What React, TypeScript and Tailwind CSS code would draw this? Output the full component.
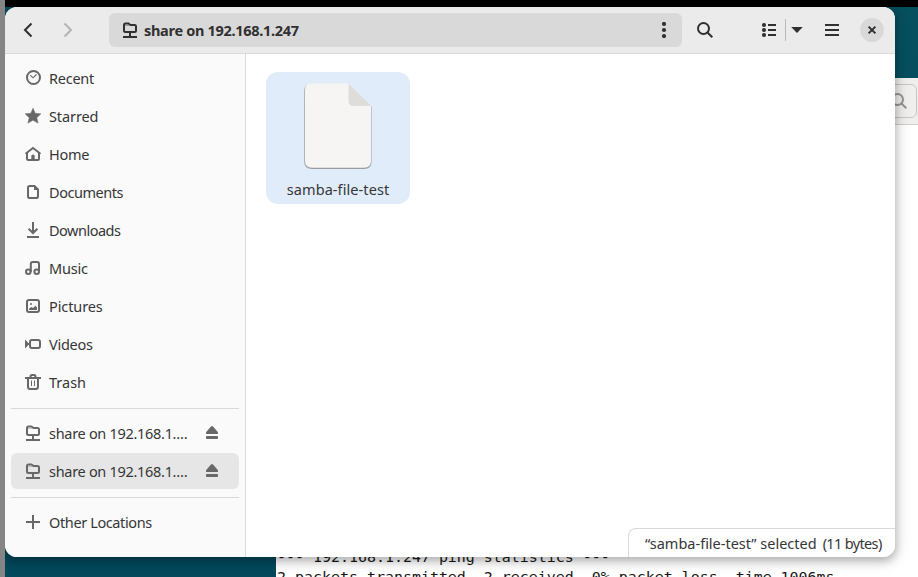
import type { ReactNode } from "react";

function Icon({ children, className = "" }: { children: ReactNode; className?: string }) {
  return (
    <svg viewBox="0 0 16 16" className={`h-4 w-4 shrink-0 ${className}`} fill="none" stroke="currentColor" strokeWidth="2">
      {children}
    </svg>
  );
}

const RemoteFolder = ({ className = "" }: { className?: string }) => (
  <Icon className={className}>
    <path d="M2 3V8.500Q2 10 3.500 10H12.500Q14 10 14 8.500V4.500Q14 3 12.500 3H8.500L6.500 1.500H3.500Q2 1.500 2 3Z" strokeWidth="2" />
    <path d="M3 3.500H7" strokeWidth="1" strokeOpacity=".35" />
    <path d="M8 11V14M1 15H15" />
  </Icon>
);

const Magnifier = ({ className = "" }: { className?: string }) => (
  <Icon className={className}>
    <circle cx="6.5" cy="6.5" r="5.5" />
    <path d="M10.5 10.5L15.3 15.3" />
  </Icon>
);

const Eject = () => (
  <Icon className="ml-auto">
    <path d="M2 9V7.300L7 1.600Q8 .6 9 1.600L14 7.300V9Z" fill="currentColor" stroke="none" />
    <rect x="2" y="11" width="12" height="3" rx=".8" fill="currentColor" stroke="none" />
  </Icon>
);

const places: { label: string; spacing: string; icon: ReactNode }[] = [
  {
    label: "Recent",
    spacing: "tracking-[-0.25px]",
    icon: (
      <>
        <circle cx="8.500" cy="7.500" r="6.500" />
        <path d="M5.300 5.200L8 7.800L11.500 4.500" strokeWidth="1.100" />
      </>
    ),
  },
  {
    label: "Starred",
    spacing: "tracking-[-0.1px]",
    icon: <path d="M8 0L10.200 5.200L16 5.800L11.800 9.700L13.200 15.200L8 12.300L2.800 15.200L4.200 9.700L0 5.800L5.800 5.200Z" fill="currentColor" stroke="currentColor" strokeWidth=".4" />,
  },
  {
    label: "Home",
    spacing: "tracking-[-0.25px]",
    icon: (
      <>
        <path d="M.5 7.800L8 2L15.500 7.800M2 7V12.500Q2 14 3.500 14H12.500Q14 14 14 12.500V7" />
        <path d="M6.300 14V10Q6.300 8.500 8 8.500T9.700 10V14Z" fill="currentColor" stroke="none" />
      </>
    ),
  },
  {
    label: "Documents",
    spacing: "tracking-[-0.45px]",
    icon: (
      <>
        <path d="M3 3.800Q3 2 4.800 2H9.500L13 5.500V12.200Q13 14 11.200 14H4.800Q3 14 3 12.200Z" />
        <path d="M9 2V6H13Z" fill="currentColor" stroke="none" />
      </>
    ),
  },
  {
    label: "Downloads",
    spacing: "tracking-[-0.5px]",
    icon: <path d="M8 0V11M3.600 6.800L8 11L12.400 6.800M2 15H14" />,
  },
  {
    label: "Music",
    spacing: "tracking-[-0.2px]",
    icon: (
      <>
        <circle cx="3.300" cy="11.700" r="2.300" />
        <circle cx="11.700" cy="11.700" r="2.300" />
        <path d="M5.800 12V4Q5.800 2 7.800 2H12Q14 2 14 4V12" />
      </>
    ),
  },
  {
    label: "Pictures",
    spacing: "tracking-[-0.1px]",
    icon: (
      <>
        <rect x="2" y="2" width="12" height="12" rx="2" />
        <path d="M4 12V10.700L6.300 9L8 10L10.500 7.700L12 9.500V12Z" fill="currentColor" stroke="none" />
        <circle cx="6" cy="6" r="1" fill="currentColor" stroke="none" />
      </>
    ),
  },
  {
    label: "Videos",
    spacing: "tracking-[-0.25px]",
    icon: (
      <>
        <rect x="5" y="4" width="10" height="8" rx="2" />
        <path d="M0 3.500L4.500 8L0 12.500Z" fill="currentColor" stroke="none" />
      </>
    ),
  },
  {
    label: "Trash",
    spacing: "tracking-[0px]",
    icon: (
      <>
        <path d="M0 4H16M3 4V12.500Q3 15 5 15H11Q13 15 13 12.500V4M5.500 4V2.500Q5.500 1 7 1H9Q10.500 1 10.500 2.500V4" />
        <path d="M6.500 6.500V12M9.500 6.500V12" strokeWidth="1" />
      </>
    ),
  },
];

function Row({ label, icon, spacing = "", selected = false, eject = false }: { label: string; icon: ReactNode; spacing?: string; selected?: boolean; eject?: boolean }) {
  return (
    <div className={`flex h-9 shrink-0 items-center rounded-md pr-[19px] pl-3.5 ${selected ? "bg-[#e6e6e6]" : ""}`}>
      <span className="mr-2 flex text-[#686868]">{icon}</span>
      <span className={`pt-0.5 whitespace-nowrap ${spacing}`}>{label}</span>
      {eject && <span className="ml-auto flex text-[#686868]"><Eject /></span>}
    </div>
  );
}

function Header() {
  return (
    <header className="flex h-[47px] shrink-0 items-center border-b border-[#d9d9d9] bg-[#ebebeb] text-[#303030]">
      <Icon className="ml-4"><path d="M10.500 1.500L4 8L10.500 14.500" /></Icon>
      <Icon className="ml-6 text-[#b4b4b4]"><path d="M3.500 1.500L10 8L3.500 14.500" /></Icon>
      <div className="ml-8 flex h-[34px] w-[573px] items-center rounded-md bg-[#d9d9d9] pr-2.5 pl-3">
        <RemoteFolder className="mr-1.5 ml-px" />
        <span className="pt-0.5 text-[14.5px] font-bold tracking-[-0.3px] whitespace-nowrap">share on 192.168.1.247</span>
        <Icon className="ml-auto">
          <g fill="currentColor" stroke="none"><circle cx="8" cy="2" r="2.1" /><circle cx="8" cy="8" r="2.1" /><circle cx="8" cy="14" r="2.1" /></g>
        </Icon>
      </div>
      <Magnifier className="ml-[15px]" />
      <Icon className="ml-12">
        <path d="M7 3H15M7 8H15M7 13H15" />
        <g fill="currentColor" stroke="none"><circle cx="3" cy="3" r="2.1" /><circle cx="3" cy="8" r="2.1" /><circle cx="3" cy="13" r="2.1" /></g>
      </Icon>
      <div className="ml-2 h-[22px] w-px bg-[#b9b9b9]" />
      <Icon className="ml-[3px]"><path d="M2.200 5H13.800L8 11Z" fill="currentColor" stroke="none" /></Icon>
      <Icon className="ml-[19px]"><path d="M1 3H15M1 8H15M1 13H15" /></Icon>
      <div className="ml-5 flex h-6 w-6 items-center justify-center rounded-full bg-[#d9d9d9]">
        <Icon><path d="M4.600 4.600L11.400 11.400M11.400 4.600L4.600 11.400" /></Icon>
      </div>
    </header>
  );
}

export default function App() {
  return (
    <main className="relative h-[577px] w-[918px] overflow-hidden bg-gradient-to-b from-[#07505f] to-[#03485b] font-['Noto_Sans',sans-serif] text-[14.5px] text-[#363636]">
      <section className="absolute top-[78px] left-[276px] flex h-[520px] w-[680px] flex-col bg-white">
        <div className="flex h-[47px] shrink-0 items-center border-b border-[#d4cecb] bg-[#f1efee]">
          <div className="ml-[600px] flex h-[34px] w-[41px] items-center justify-end rounded-md border border-[#cbc5c1] pr-[9px] text-[#949494]">
            <Magnifier />
          </div>
        </div>
        <pre className="mt-[422px] pl-px font-['DejaVu_Sans_Mono',monospace] text-[14.95px] leading-[20px] text-[#171717]">
          {"--- 192.168.1.247 ping statistics ---\n2 packets transmitted, 2 received, 0% packet loss, time 1006ms"}
        </pre>
      </section>
      <div className="absolute top-[7px] left-[5px] h-[550px] w-[890px] rounded-xl shadow-[0_3px_9px_1px_rgba(0,0,0,0.25),0_2px_14px_5px_rgba(0,0,0,0.08)]" />
      <div className="absolute top-0 left-0 h-full w-[5px] bg-[#858585]" />
      <div className="absolute top-0 left-[5px] h-[7px] w-full bg-black" />
      <section className="absolute top-[7px] left-[5px] flex h-[550px] w-[890px] flex-col overflow-hidden rounded-xl bg-white">
        <Header />
        <div className="flex min-h-0 grow">
          <nav className="flex w-[241px] shrink-0 flex-col gap-0.5 border-r border-[#d9d9d9] bg-[#fafafa] px-1.5 pt-1.5">
            {places.map((place) => (
              <Row key={place.label} label={place.label} spacing={place.spacing} icon={<Icon>{place.icon}</Icon>} />
            ))}
            <hr className="mt-1.5 mb-1 shrink-0 border-[#d9d9d9]" />
            <Row label="share on 192.168.1.…" spacing="tracking-[-0.3px]" icon={<RemoteFolder />} eject />
            <Row label="share on 192.168.1.…" spacing="tracking-[-0.3px]" icon={<RemoteFolder />} selected eject />
            <hr className="mt-1.5 mb-1 shrink-0 border-[#d9d9d9]" />
            <Row label="Other Locations" spacing="tracking-[-0.38px]" icon={<Icon><path d="M8 1V15M1 8H15" /></Icon>} />
          </nav>
          <div className="flex min-w-0 grow flex-col justify-between">
            <div className="mt-[18px] ml-5 flex h-[132px] w-36 flex-col items-center rounded-xl bg-[#e1ecfa] pt-[11px]">
              <svg viewBox="0 0 70 88" className="h-[88px] w-[70px] shrink-0">
                <path d="M8 1H45.500L68.500 23.500V79Q68.500 86 61 86H9Q1.300 86 1.300 79V8Q1.300 1 8 1Z" fill="#9a9ea4" />
                <path d="M8 .5H45.500L68 23V78Q68 84.700 61 84.700H9Q2 84.700 2 78V7Q2 .5 8 .5Z" fill="#f6f5f4" />
                <path d="M45.500 .5L68 23H50.500Q45.500 23 45.500 18Z" fill="#deddda" />
              </svg>
              <span className="mt-2 leading-5 tracking-[0.08px] whitespace-nowrap">samba-file-test</span>
            </div>
            <div className="flex h-[29px] w-[267px] items-center gap-1.5 self-end rounded-tl-lg border-t border-l border-[#d9d9d9] pt-0.5 pl-4 whitespace-nowrap">
              <span>“samba-file-test” selected</span>
              <span className="tracking-[-0.65px]">(11 bytes)</span>
            </div>
          </div>
        </div>
      </section>
    </main>
  );
}
